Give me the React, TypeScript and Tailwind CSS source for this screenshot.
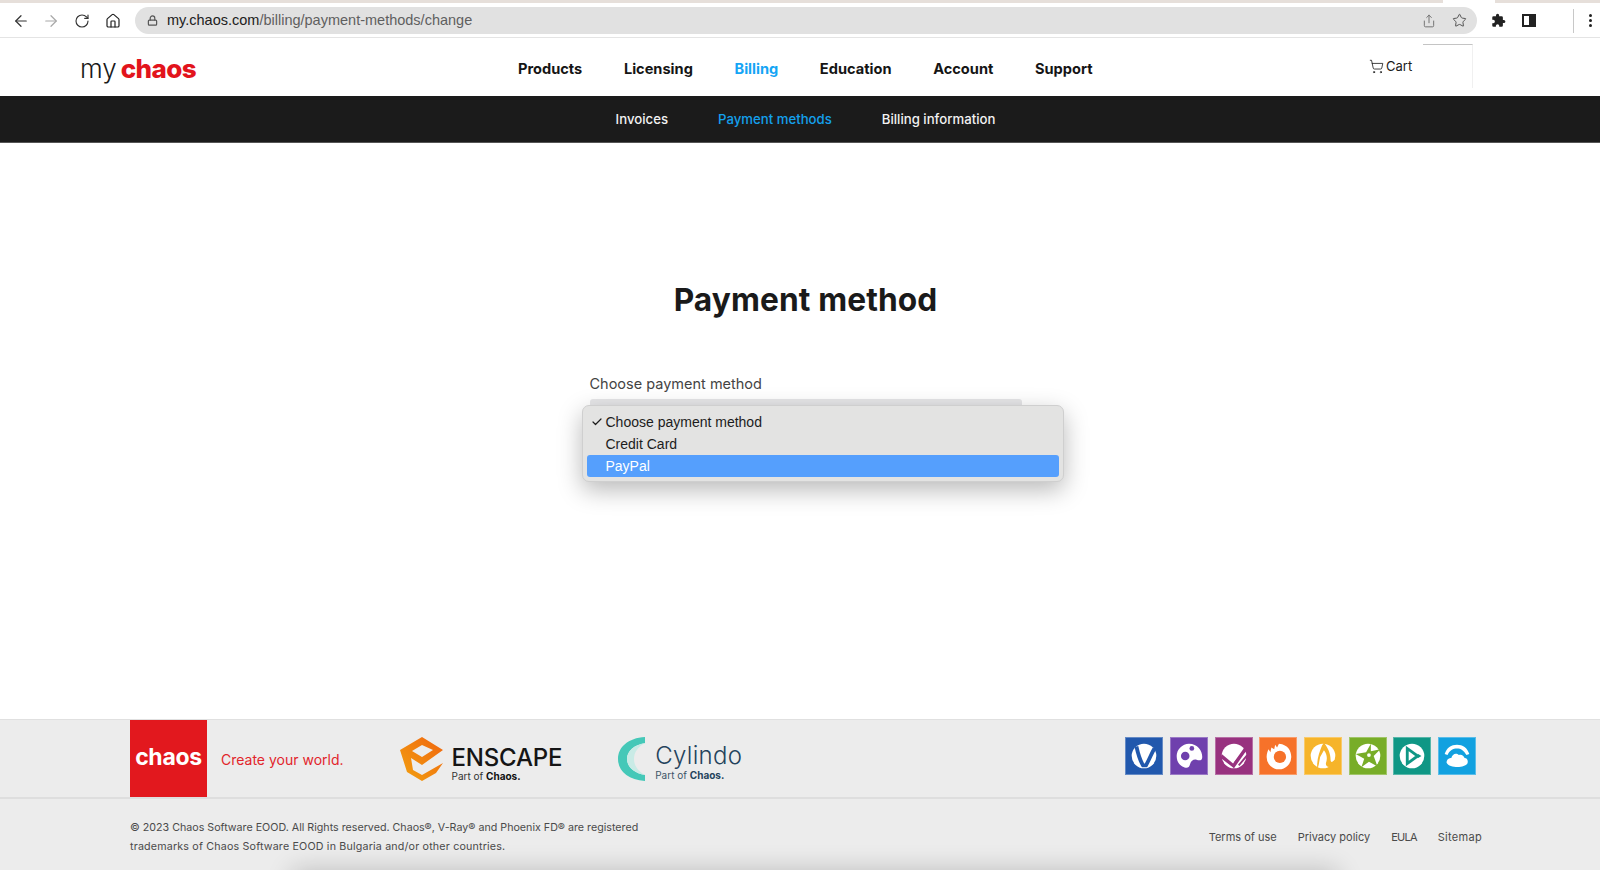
import React from "react";
import { ArrowLeft, ArrowRight, RotateCw, Home, Lock, Share, Star, ShoppingCart, Check } from "lucide-react";

const font = { fontFamily: "Inter, 'Liberation Sans', sans-serif" };

function BrowserBar() {
  return (
    <div className="h-[38px] shrink-0 bg-white border-b border-[#e4e4e4] relative" style={{ fontFamily: "'Liberation Sans', sans-serif" }}>
      <div className="h-[3px] flex justify-between">
        <div className="w-[1443px] bg-[#e6dfda]" />
        <div className="w-[105px] bg-[#e6dfda]" />
      </div>
      <div className="flex items-center h-[35px]">
        <div className="flex items-center w-[135px] pl-[12px] gap-[12px] shrink-0">
          <ArrowLeft size={18} strokeWidth={1.6} className="text-[#333]" />
          <ArrowRight size={18} strokeWidth={1.6} className="text-[#a8a8a8]" />
          <RotateCw size={16} strokeWidth={1.7} className="text-[#333] ml-[2px]" />
          <Home size={16} strokeWidth={1.8} className="text-[#222] ml-[3px]" />
        </div>
        <div className="w-[1342px] h-[27px] bg-[#e1e1e1] rounded-full flex items-center pl-[12px] pr-[10px] shrink-0">
          <Lock size={11} strokeWidth={2.6} className="text-[#555]" />
          <span className="ml-[9px] text-[14.5px] text-[#202020]">my.chaos.com</span>
          <span className="text-[14.5px] text-[#5f5f5f]">/billing/payment-methods/change</span>
          <div className="ml-auto flex items-center gap-[16px]">
            <Share size={14} strokeWidth={1.5} className="text-[#666]" />
            <Star size={15} strokeWidth={1.6} className="text-[#555]" />
          </div>
        </div>
        <svg viewBox="0 0 24 24" className="w-[15px] h-[15px] ml-[14px] text-[#222]" fill="currentColor">
          <path d="M20.5 11H19V7a2 2 0 0 0-2-2h-4V3.5a2.5 2.5 0 0 0-5 0V5H4a2 2 0 0 0-2 2v3.8h1.5a2.7 2.7 0 0 1 0 5.4H2V20a2 2 0 0 0 2 2h3.8v-1.5a2.7 2.7 0 0 1 5.4 0V22H17a2 2 0 0 0 2-2v-4h1.5a2.5 2.5 0 0 0 0-5z" />
        </svg>
        <div className="w-[14px] h-[13px] border-[2px] border-[#222] ml-[16px] flex justify-end">
          <div className="w-[5px] bg-[#222]" />
        </div>
        <div className="w-px h-[24px] bg-[#c8c8c8] ml-[37px]" />
        <div className="ml-[15px] flex flex-col gap-[2px]">
          <div className="w-[3px] h-[3px] rounded-full bg-[#222]" />
          <div className="w-[3px] h-[3px] rounded-full bg-[#222]" />
          <div className="w-[3px] h-[3px] rounded-full bg-[#222]" />
        </div>
      </div>
    </div>
  );
}

function Header() {
  const items = ["Products", "Licensing", "Billing", "Education", "Account", "Support"];
  return (
    <div className="h-[58px] shrink-0 bg-white flex items-center relative">
      <div className="w-[518px] shrink-0 pl-[80px] flex items-baseline gap-[4px] leading-none mt-[3px]">
        <span className="text-[26px] text-[#1a1a1a] font-light">my</span>
        <span className="text-[26px] text-[#e2141c] font-extrabold tracking-[-0.6px]">chaos</span>
      </div>
      <nav className="flex gap-[41.6px] text-[14.6px] font-bold text-[#151515] mt-[6px]">
        {items.map((i) => (
          <span key={i} className={i === "Billing" ? "text-[#14a5f5]" : ""}>{i}</span>
        ))}
      </nav>
      <div className="absolute left-[1423px] top-[6px] w-[50px] h-[44px] border-t border-r border-t-[#c4c4c4] border-r-[#f0f0f0]" />
      <div className="absolute left-[1369px] top-[19px] flex items-center gap-[2px] text-[13px] text-[#1a1a1a]">
        <ShoppingCart size={15} strokeWidth={1.3} />
        <span>Cart</span>
      </div>
    </div>
  );
}

function SubNav() {
  return (
    <div className="h-[47px] shrink-0 bg-[#1b1b1b] border-b border-[#555] flex items-center justify-center text-[13.2px] font-medium text-[#f2f2f2] gap-[50px] pl-[11px] pt-[2px]">
      <span>Invoices</span>
      <span className="text-[#14a0ec]">Payment methods</span>
      <span>Billing information</span>
    </div>
  );
}

function PaymentForm() {
  return (
    <main className="flex-1 bg-white flex flex-col items-center relative pl-[11px]">
      <h1 className="mt-[135px] text-[31.7px] leading-[44px] font-bold text-[#1a1a1a] tracking-[0.1px]">Payment method</h1>
      <div className="mt-[51px] w-[432px] relative">
        <div className="text-[14.5px] leading-[22px] text-[#444]">Choose payment method</div>
        <div className="mt-[4px] h-[44px] bg-[#e6e6e8] rounded-[3px]" />
        <div
          className="absolute left-[-8px] top-[32px] w-[482px] h-[77px] bg-[#e3e3e2] border border-[#cfcfcf] rounded-[7px] shadow-[0_8px_24px_rgba(0,0,0,0.28)] p-[4px] pt-[5px] text-[14px] text-[#1c1c1c]"
          style={{ fontFamily: "'Liberation Sans', sans-serif" }}
        >
          <div className="h-[22px] flex items-center pl-[19px] relative">
            <Check size={12} strokeWidth={2.4} className="absolute left-[4px]" />
            Choose payment method
          </div>
          <div className="h-[22px] flex items-center pl-[19px]">Credit Card</div>
          <div className="h-[22px] flex items-center pl-[19px] bg-[#559ffd] text-white rounded-[3px]">PayPal</div>
        </div>
      </div>
    </main>
  );
}

function ChaosLogos() {
  return (
    <div className="flex items-center">
      <div className="w-[77px] h-[77px] bg-[#e2181e] flex items-center justify-center text-white text-[23px] font-bold leading-none pb-[2px] tracking-[-0.3px]">
        chaos
      </div>
      <span className="ml-[14px] text-[14px] text-[#e2252b] mt-[1px]">Create your world.</span>
      <svg viewBox="0 0 44 44" className="w-[44px] h-[44px] ml-[56px]">
        <defs>
          <linearGradient id="enscape" x1="0" y1="1" x2="1" y2="0">
            <stop offset="0" stopColor="#f2a20f" />
            <stop offset="1" stopColor="#f0650f" />
          </linearGradient>
        </defs>
        <path
          fillRule="evenodd"
          d="M22 0 L43 13 L22 28 L11 21 L13 33 L22 38 L43 26 L36 36 L22 44 L7 35 L0 13 Z M22 8 L12 14 L22 20 L33 13 Z"
          fill="url(#enscape)"
        />
      </svg>
      <div className="ml-[8px] flex flex-col mt-[12px]">
        <span className="text-[24px] leading-[24px] font-medium text-[#151515] tracking-[-0.2px]">ENSCAPE</span>
        <span className="text-[10px] leading-[13px] text-[#333]">
          Part of <b className="text-[#111]">Chaos.</b>
        </span>
      </div>
      <svg viewBox="0 0 28 44" className="w-[28px] h-[44px] ml-[56px]">
        <path d="M27 0 C10 1 0 10 0 22 C0 34 10 43 27 44 L27 38 C16 36 9 30 9 22 C9 14 16 8 27 6 Z" fill="#45c8b8" />
        <path d="M27 6 C16 8 9 14 9 22 C9 30 16 36 27 38 C20 34 16 29 16 22 C16 15 20 10 27 6 Z" fill="#c9ebe6" />
      </svg>
      <div className="ml-[9px] flex flex-col mt-[8px]">
        <span className="text-[24px] leading-[26px] font-light text-[#24435c] tracking-[0.3px]">Cylindo</span>
        <span className="text-[10px] leading-[13px] text-[#3d5568]">
          Part of <b className="text-[#24435c]">Chaos.</b>
        </span>
      </div>
    </div>
  );
}

function ProductIcon({ color, children }: { color: string; children: React.ReactNode }) {
  return (
    <div className="w-[38px] h-[38px] border border-white/30" style={{ backgroundColor: color }}>
      <svg viewBox="0 0 38 38" className="w-full h-full">
        {children}
      </svg>
    </div>
  );
}

function ProductIcons() {
  return (
    <div className="flex gap-[6.7px] pt-[17px]">
      <ProductIcon color="#2158ad">
        <circle cx="19" cy="19" r="13" fill="#fff" />
        <path d="M11 9 C13 18 15 24 18 29 L21 29 C25 22 27 16 30 11" fill="none" stroke="#2158ad" strokeWidth="4" />
      </ProductIcon>
      <ProductIcon color="#6f40ad">
        <path d="M19 6 C28 6 33 13 33 20 C33 24 30 24 27 23 C24 22 21 24 20 28 C19 32 16 32 12 30 C8 28 6 24 6 19 C6 12 12 6 19 6 Z" fill="#fff" />
        <circle cx="15" cy="19" r="4.5" fill="#6f40ad" />
        <circle cx="22" cy="11" r="2.5" fill="#6f40ad" />
      </ProductIcon>
      <ProductIcon color="#98327f">
        <circle cx="19" cy="19" r="13" fill="#fff" />
        <path d="M5 21 L19 32 L33 12 L30 10 L18 27 L6 17 Z" fill="#98327f" />
        <path d="M20 26 L31 13 M24 29 L33 18" stroke="#98327f" strokeWidth="2" />
      </ProductIcon>
      <ProductIcon color="#f6722a">
        <path d="M20 6 C30 7 33 14 33 20 A13 13 0 0 1 7 20 C7 17 8 14 9 12 L11 15 L12 10 L15 12 L16 7 L18 10 Z" fill="#fff" />
        <circle cx="21" cy="20" r="6.5" fill="#f6722a" />
      </ProductIcon>
      <ProductIcon color="#f6b42a">
        <circle cx="19" cy="19" r="13" fill="#fff" />
        <path d="M13 33 C15 28 15 24 16 20 L20 13 C23 17 24 21 22 27 C22 32 29 32 33 25 L31 23 C29 26 27 26 27 23 C27 16 24 10 20 5 L18 8 C15 15 12 24 13 33 Z" fill="#f6b42a" />
      </ProductIcon>
      <ProductIcon color="#78ad28">
        <circle cx="19" cy="19" r="13" fill="#fff" />
        <path d="M22 6 L17 15 L6 17 L15 22 L12 31 L20 25 L29 30 L25 19 L32 12 L22 14 Z" fill="#78ad28" />
        <circle cx="20" cy="18" r="2" fill="#fff" />
      </ProductIcon>
      <ProductIcon color="#0f9785">
        <circle cx="19" cy="19" r="13" fill="#fff" />
        <path d="M14 11 L14 27 L25 19 Z" fill="none" stroke="#0f9785" strokeWidth="3" />
        <path d="M25 16.5 L29 19 L25 21.5 Z" fill="#0f9785" />
      </ProductIcon>
      <ProductIcon color="#12a1e0">
        <path d="M6 17 C8 10 13 7 19 7 C25 7 30 10 32 17 L29 18 C26 13 23 11 19 11 C15 11 11 13 9 18 Z" fill="#fff" />
        <path d="M8 26 C8 22 11 21 13 21 C14 17 18 15 21 18 C24 17 26 19 27 21 C30 21 31 24 30 27 C27 32 11 32 8 26 Z" fill="#fff" />
      </ProductIcon>
    </div>
  );
}

function Footer() {
  return (
    <footer className="h-[151px] shrink-0 bg-[#ececec] border-t border-[#e0e0e0] relative overflow-hidden">
      <div className="h-[77px] pl-[130px] pr-[124px] flex justify-between">
        <ChaosLogos />
        <ProductIcons />
      </div>
      <div className="h-[2px] bg-[#dedede]" />
      <div className="pl-[130px] pr-[118px] pt-[19px] flex justify-between text-[11px] text-[#4a4a4a]">
        <div className="leading-[19px] text-[10.7px]">
          © 2023 Chaos Software EOOD. All Rights reserved. Chaos®, V-Ray® and Phoenix FD® are registered
          <br />
          <span className="tracking-[0.18px]">trademarks of Chaos Software EOOD in Bulgaria and/or other countries.</span>
        </div>
        <div className="flex gap-[21px] pt-[10px] leading-[19px]">
          <span>Terms of use</span>
          <span>Privacy policy</span>
          <span className="tracking-[-0.8px]">EULA</span>
          <span className="tracking-[0.3px]">Sitemap</span>
        </div>
      </div>
      <div className="absolute left-[300px] right-[270px] bottom-[-22px] h-[14px] shadow-[0_0_26px_8px_rgba(0,0,0,0.2)]" />
    </footer>
  );
}

export default function App() {
  return (
    <div className="w-[1600px] h-[870px] flex flex-col overflow-hidden bg-white" style={font}>
      <BrowserBar />
      <Header />
      <SubNav />
      <PaymentForm />
      <Footer />
    </div>
  );
}
